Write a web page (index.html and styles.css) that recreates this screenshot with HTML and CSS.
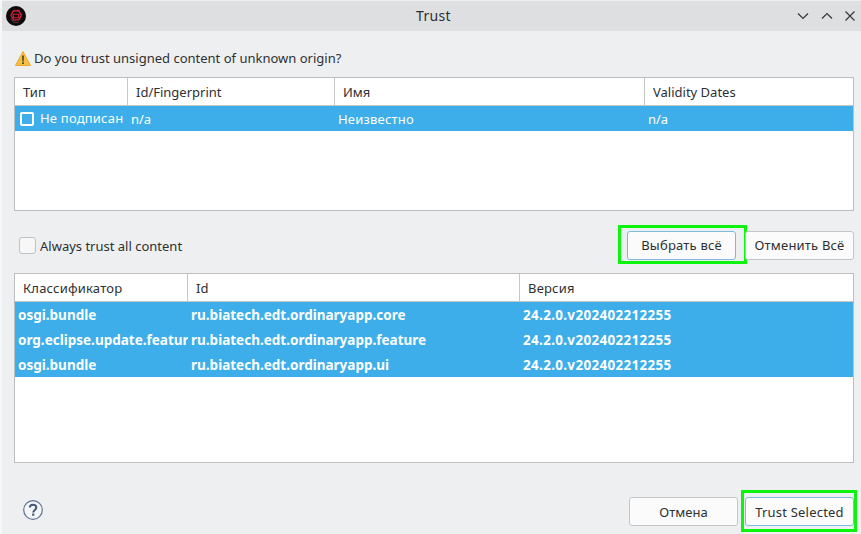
FILE: index.html
```html
<!DOCTYPE html>
<html lang="ru">
<head>
  <meta charset="UTF-8">
  <title>Trust</title>
  <link rel="stylesheet" href="styles.css">
</head>
<body>
  <div class="window">
    <div class="titlebar">
      <svg class="app-logo" width="20" height="20" viewBox="0 0 22 22">
        <circle cx="11" cy="11" r="11" fill="#0c0a0b"/>
        <path d="M8 5.500 14 5 17 10 14.500 15 8.500 15.500 5.500 10.500Z" fill="none" stroke="#d3213a" stroke-width="1.500"/>
        <path d="M8 9h6v4H8z" fill="none" stroke="#d3213a" stroke-width="1.200"/>
        <path d="M5.500 14 9 18h5" fill="none" stroke="#3a3335" stroke-width="1.500"/>
      </svg>
      <span class="title">Trust</span>
      <div class="win-buttons">
        <svg width="12" height="8" viewBox="0 0 12 8"><path d="M1 1.500 6 6.500 11 1.500" class="win-stroke"/></svg>
        <svg width="12" height="8" viewBox="0 0 12 8"><path d="M1 6.500 6 1.500 11 6.500" class="win-stroke"/></svg>
        <svg width="10" height="10" viewBox="0 0 10 10"><path d="M.5.500 9.500 9.500M9.500.500.500 9.500" class="win-stroke"/></svg>
      </div>
    </div>

    <div class="content">
      <div class="question">
        <svg width="16" height="15" viewBox="0 0 16 15">
          <path d="M8 .5 15.500 14.500H.5Z" fill="#f5c045" stroke="#e9a92c" stroke-linejoin="round"/>
          <path d="M7.200 4.500h1.600l-.2 6H7.400z" fill="#3a3320"/>
          <rect x="7.200" y="11.300" width="1.600" height="1.700" fill="#3a3320"/>
        </svg>
        <span>Do you trust unsigned content of unknown origin?</span>
      </div>

      <div class="table table-top">
        <div class="row head cols-top">
          <div class="cell">Тип</div>
          <div class="cell">Id/Fingerprint</div>
          <div class="cell">Имя</div>
          <div class="cell">Validity Dates</div>
        </div>
        <div class="row item cols-top">
          <div class="val first"><span class="tick"></span><span class="wide">Не подписан</span></div>
          <div class="val">n/a</div>
          <div class="val wide">Неизвестно</div>
          <div class="val">n/a</div>
        </div>
      </div>

      <div class="options">
        <label class="always"><span class="box"></span><span class="always-text">Always trust all content</span></label>
        <div class="option-buttons">
          <button class="btn wide focused marked marked-select">Выбрать всё</button>
          <button class="btn wide">Отменить Всё</button>
        </div>
      </div>

      <div class="table table-bottom">
        <div class="row head cols-bottom">
          <div class="cell wide">Классификатор</div>
          <div class="cell">Id</div>
          <div class="cell wide">Версия</div>
        </div>
        <div class="row item strong cols-bottom">
          <div class="val">osgi.bundle</div>
          <div class="val">ru.biatech.edt.ordinaryapp.core</div>
          <div class="val version">24.2.0.v202402212255</div>
        </div>
        <div class="row item strong cols-bottom">
          <div class="val">org.eclipse.update.feature</div>
          <div class="val">ru.biatech.edt.ordinaryapp.feature</div>
          <div class="val version">24.2.0.v202402212255</div>
        </div>
        <div class="row item strong cols-bottom">
          <div class="val">osgi.bundle</div>
          <div class="val">ru.biatech.edt.ordinaryapp.ui</div>
          <div class="val version">24.2.0.v202402212255</div>
        </div>
      </div>

      <div class="footer">
        <svg class="help" width="20" height="20" viewBox="0 0 20 20">
          <circle cx="10" cy="10" r="9.300" fill="#f4f5f7" stroke="#5d7297" stroke-width="1.200"/>
          <path d="M6.800 7.600C6.800 5.700 8.200 4.700 10 4.700s3.300 1 3.300 2.800c0 2.500-3 2.400-3 5" fill="none" stroke="#46597c" stroke-width="2"/>
          <rect x="9.100" y="13.500" width="2.200" height="2.200" fill="#46597c"/>
        </svg>
        <div class="footer-buttons">
          <button class="btn">Отмена</button>
          <button class="btn wide focused marked marked-trust">Trust Selected</button>
        </div>
      </div>
    </div>
  </div>
</body>
</html>
```

FILE: styles.css
```css
* {
  box-sizing: border-box;
}
html, body {
  margin: 0;
  height: 100%;
}
body {
  font-family: 'Noto Sans', sans-serif;
  font-size: 13px;
  color: #2d3033;
  background: #f6f6f7;
  overflow: hidden;
}
.window {
  height: 534px;
  margin-left: 2px;
  padding-top: 1px;
  background: #eeeff1;
}
.titlebar {
  display: flex;
  align-items: center;
  height: 30px;
  padding-left: 4px;
  background: #dedfe1;
}
.title {
  flex: 1;
  padding: 0 0 2px 44px;
  text-align: center;
  font-size: 14px;
  letter-spacing: .3px;
}
.win-buttons {
  display: flex;
  align-items: center;
  gap: 12px;
  padding-right: 6px;
}
.win-stroke {
  fill: none;
  stroke: #35373a;
  stroke-width: 1.2;
}
.content {
  padding: 0 7px 0 12px;
}
.question {
  display: flex;
  align-items: center;
  gap: 3px;
  height: 46px;
  padding: 8px 0 0 1px;
}
.wide {
  letter-spacing: .2px;
}
.table {
  background: #fff;
  border: 1px solid #bcbec0;
}
.table-top {
  height: 134px;
}
.table-bottom {
  height: 190px;
}
.row {
  display: grid;
}
.cols-top {
  grid-template-columns: 113px 207px 310px 208px;
}
.cols-bottom {
  grid-template-columns: 173px 332px 333px;
}
.head {
  height: 28px;
  border-bottom: 1px solid #c4c6c8;
}
.cell {
  padding: 5px 0 0 8px;
  border-right: 1px solid #c4c6c8;
  white-space: nowrap;
}
.cell:last-child {
  border-right: none;
}
.item {
  height: 25px;
  background: #3daee9;
  color: #fcfeff;
  line-height: 27px;
}
.val {
  padding-left: 3px;
  white-space: nowrap;
  overflow: hidden;
}
.first {
  display: flex;
  align-items: center;
  gap: 6px;
  padding-left: 5px;
}
.tick {
  width: 14px;
  height: 14px;
  background: #3daee9;
  border: 2px solid #fff;
  border-radius: 2px;
}
.strong {
  font-size: 13.5px;
  font-weight: 700;
}
.version {
  letter-spacing: .3px;
}
.options {
  display: flex;
  align-items: center;
  justify-content: space-between;
  height: 62px;
  padding: 6px 0 0 5px;
}
.always {
  display: flex;
  align-items: center;
  gap: 4px;
}
.always-text {
  padding-top: 1px;
}
.box {
  width: 17px;
  height: 17px;
  background: #f7f7f8;
  border: 1px solid #bfc1c3;
  border-radius: 3px;
}
.option-buttons {
  display: flex;
  gap: 9px;
}
.footer-buttons {
  display: flex;
  gap: 7px;
}
.btn {
  position: relative;
  width: 109px;
  height: 29px;
  padding: 0;
  font: inherit;
  color: inherit;
  background: #fbfbfb;
  border: 1px solid #c3c5c7;
  border-radius: 3px;
}
.focused {
  border-color: #7fb9dc;
}
/* green annotation frames, they lie over the buttons */
.marked::after {
  content: "";
  position: absolute;
  border: 3px solid #0cf40c;
  pointer-events: none;
}
.marked-select::after {
  inset: -7px -12px -5px -10px;
}
.marked-trust::after {
  inset: -8px -4px -7px -5px;
}
.footer {
  display: flex;
  align-items: center;
  justify-content: space-between;
  padding: 34px 0 0 9px;
}
.help {
  margin-bottom: 4px;
}
```
